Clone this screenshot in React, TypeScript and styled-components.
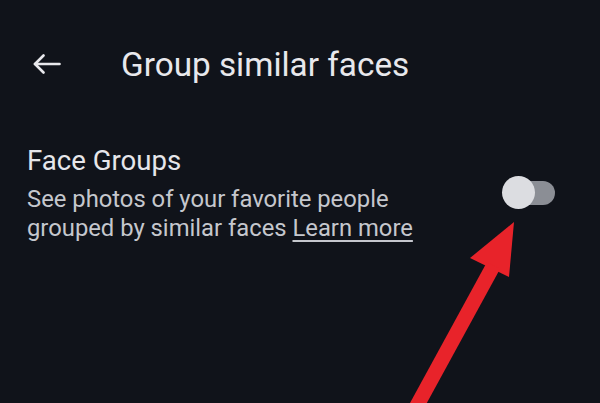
import React from "react";
import styled, { createGlobalStyle } from "styled-components";

const Global = createGlobalStyle`
  html, body { margin: 0; padding: 0; background: #10131a; }
  body { width: 600px; height: 403px; overflow: hidden; }
`;

const Screen = styled.div`
  position: relative;
  width: 600px;
  height: 403px;
  background: #10131a;
  font-family: Roboto, "Noto Sans", sans-serif;
  color: #e4e4e8;
`;

const Header = styled.header`
  display: flex;
  align-items: center;
  height: 64px;
  padding: 32px 0 0 33px;
`;

const BackButton = styled.div`
  display: flex;
  width: 28px;
  height: 20px;
  color: #e8e8ec;
`;

const Title = styled.h1`
  margin: 0 0 0 60px;
  font-size: 33.3px;
  font-weight: 400;
  color: #e8e8ec;
  letter-spacing: 0;
`;

const Row = styled.section`
  display: flex;
  align-items: center;
  justify-content: space-between;
  padding: 49px 45px 0 27px;
`;

const TextCol = styled.div`
  display: flex;
  flex-direction: column;
`;

const RowTitle = styled.div`
  font-size: 27.6px;
  line-height: 32px;
  color: #e6e6ea;
`;

const RowDesc = styled.div`
  margin-top: 8px;
  font-size: 23.8px;
  line-height: 29px;
  color: #c5c7cd;
`;

const Link = styled.span`
  text-decoration: underline;
  text-underline-offset: 4px;
  text-decoration-thickness: 2px;
`;

const Toggle = styled.div`
  position: relative;
  width: 52px;
  height: 24px;
  border-radius: 12px;
  background: #8b8e95;
  margin-top: -2px;
`;

const Thumb = styled.div`
  position: absolute;
  left: -1px;
  top: -5px;
  width: 33px;
  height: 33px;
  border-radius: 50%;
  background: #dcdde1;
`;

const Overlay = styled.svg`
  position: absolute;
  left: 0;
  top: 0;
  pointer-events: none;
`;

export default function App() {
  return (
    <Screen>
      <Global />
      <Header>
        <BackButton>
          <svg width="28" height="20" viewBox="0 0 28 20" fill="none" stroke="currentColor" strokeWidth="2.6" strokeLinecap="round" strokeLinejoin="round">
            <path d="M26.5 10H2" />
            <path d="M10.5 1.5L2 10l8.5 8.5" />
          </svg>
        </BackButton>
        <Title>Group similar faces</Title>
      </Header>
      <Row>
        <TextCol>
          <RowTitle>Face Groups</RowTitle>
          <RowDesc>
            See photos of your favorite people
            <br />
            grouped by similar faces <Link>Learn more</Link>
          </RowDesc>
        </TextCol>
        <Toggle>
          <Thumb />
        </Toggle>
      </Row>
      <Overlay width="600" height="403" viewBox="0 0 600 403">
        <polygon points="514,222 470,258 509,277" fill="#e8232a" />
        <polygon points="487,262 500,269 423,410 410,403" fill="#e8232a" />
      </Overlay>
    </Screen>
  );
}
